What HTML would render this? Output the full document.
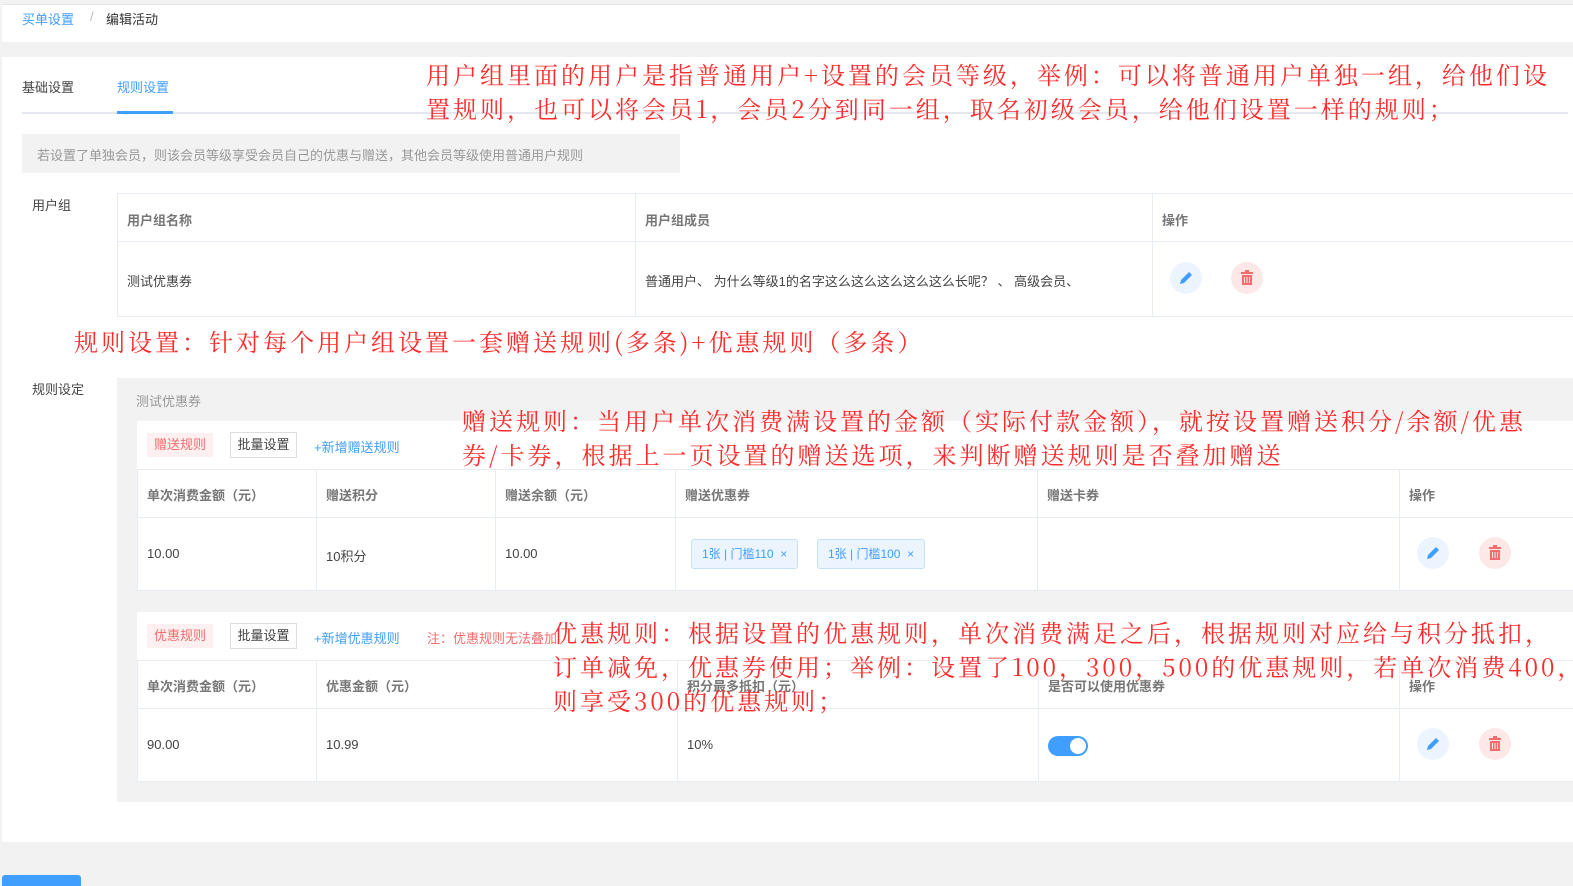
<!DOCTYPE html>
<html><head><meta charset="utf-8"><style>
*{margin:0;padding:0;box-sizing:border-box}
body{width:1573px;height:886px;position:relative;overflow:hidden;background:#f2f2f2;font-family:"Liberation Sans","Noto Sans CJK SC",sans-serif;font-size:13px;color:#444}
.a{position:absolute;white-space:nowrap}
.w{position:absolute;background:#fff}
.red{position:absolute;white-space:nowrap;color:#ff2a2a;font-family:"Noto Serif CJK SC",serif;font-size:24px;line-height:34px;letter-spacing:3px}
.th{position:absolute;color:#777;font-weight:bold;font-size:13px}
.hl{position:absolute;height:1px;background:#e8ecf3}
.vl{position:absolute;width:1px;background:#e8ecf3}
.ic{position:absolute;width:32px;height:32px;border-radius:50%}
.ed{background:#ecf5ff}.dl{background:#fde8e8}
.tag{position:absolute;height:30px;line-height:28px;border:1px solid #c6e0fb;background:#ecf5ff;color:#409eff;font-size:12px;padding:0 10px;border-radius:3px}
</style></head><body>
<div class="w" style="left:2px;top:4px;width:1571px;height:38px;border-top:1px solid #e6e6e6"></div>
<div class="a" style="left:22px;top:9px;color:#409eff">买单设置</div>
<div class="a" style="left:90px;top:9px;color:#bbb">/</div>
<div class="a" style="left:106px;top:9px;color:#333">编辑活动</div>
<div class="w" style="left:2px;top:57px;width:1571px;height:785px"></div>
<div class="a" style="left:22px;top:77px">基础设置</div>
<div class="a" style="left:117px;top:77px;color:#409eff">规则设置</div>
<div class="hl" style="left:22px;top:112px;width:1546px;height:2px;background:#e4e7ed"></div>
<div class="a" style="left:117px;top:111px;width:56px;height:3px;background:#409eff"></div>
<div class="a" style="left:22px;top:134px;width:658px;height:39px;background:#f2f2f2"></div>
<div class="a" style="left:37px;top:145px;color:#999">若设置了单独会员，则该会员等级享受会员自己的优惠与赠送，其他会员等级使用普通用户规则</div>
<div class="a" style="left:32px;top:195px">用户组</div>
<div class="hl" style="left:117px;top:193px;width:1456px"></div>
<div class="hl" style="left:117px;top:241px;width:1456px"></div>
<div class="hl" style="left:117px;top:316px;width:1456px"></div>
<div class="vl" style="left:117px;top:193px;height:124px"></div>
<div class="vl" style="left:635px;top:193px;height:124px"></div>
<div class="vl" style="left:1152px;top:193px;height:124px"></div>
<div class="th" style="left:127px;top:210px">用户组名称</div>
<div class="th" style="left:645px;top:210px">用户组成员</div>
<div class="th" style="left:1162px;top:210px">操作</div>
<div class="a" style="left:127px;top:271px">测试优惠券</div>
<div class="a" style="left:645px;top:271px">普通用户、 为什么等级1的名字这么这么这么这么这么长呢？ 、 高级会员、</div>
<div class="ic ed" style="left:1170px;top:262px"></div><div class="ic dl" style="left:1231px;top:262px"></div>
<div class="a" style="left:32px;top:379px">规则设定</div>
<div class="a" style="left:117px;top:378px;width:1456px;height:424px;background:#f2f2f2"></div>
<div class="a" style="left:136px;top:391px;color:#999">测试优惠券</div>
<div class="w" style="left:137px;top:421px;width:1436px;height:169px"></div>
<div class="a" style="left:147px;top:433px;width:66px;height:24px;background:#fef0f0;color:#f56c6c;line-height:24px;text-align:center">赠送规则</div>
<div class="a" style="left:230px;top:432px;width:67px;height:26px;border:1px solid #ddd;line-height:24px;text-align:center">批量设置</div>
<div class="a" style="left:314px;top:437px;color:#409eff">+新增赠送规则</div>
<div class="hl" style="left:137px;top:469px;width:1436px"></div>
<div class="hl" style="left:137px;top:517px;width:1436px"></div>
<div class="hl" style="left:137px;top:590px;width:1436px"></div>
<div class="vl" style="left:137px;top:469px;height:121px"></div>
<div class="vl" style="left:316px;top:469px;height:121px"></div>
<div class="vl" style="left:495px;top:469px;height:121px"></div>
<div class="vl" style="left:675px;top:469px;height:121px"></div>
<div class="vl" style="left:1037px;top:469px;height:121px"></div>
<div class="vl" style="left:1399px;top:469px;height:121px"></div>
<div class="th" style="left:147px;top:485px">单次消费金额（元）</div>
<div class="th" style="left:326px;top:485px">赠送积分</div>
<div class="th" style="left:505px;top:485px">赠送余额（元）</div>
<div class="th" style="left:685px;top:485px">赠送优惠券</div>
<div class="th" style="left:1047px;top:485px">赠送卡券</div>
<div class="th" style="left:1409px;top:485px">操作</div>
<div class="a" style="left:147px;top:546px">10.00</div>
<div class="a" style="left:326px;top:546px">10积分</div>
<div class="a" style="left:505px;top:546px">10.00</div>
<div class="tag" style="left:691px;top:539px">1张 | 门槛110 &nbsp;×</div>
<div class="tag" style="left:817px;top:539px">1张 | 门槛100 &nbsp;×</div>
<div class="ic ed" style="left:1417px;top:537px"></div><div class="ic dl" style="left:1479px;top:537px"></div>
<div class="w" style="left:137px;top:612px;width:1436px;height:169px"></div>
<div class="a" style="left:147px;top:624px;width:66px;height:24px;background:#fef0f0;color:#f56c6c;line-height:24px;text-align:center">优惠规则</div>
<div class="a" style="left:230px;top:623px;width:67px;height:26px;border:1px solid #ddd;line-height:24px;text-align:center">批量设置</div>
<div class="a" style="left:314px;top:628px;color:#409eff">+新增优惠规则</div>
<div class="a" style="left:427px;top:628px;color:#f56c6c">注：优惠规则无法叠加</div>
<div class="hl" style="left:137px;top:660px;width:1436px"></div>
<div class="hl" style="left:137px;top:708px;width:1436px"></div>
<div class="hl" style="left:137px;top:781px;width:1436px"></div>
<div class="vl" style="left:137px;top:660px;height:121px"></div>
<div class="vl" style="left:316px;top:660px;height:121px"></div>
<div class="vl" style="left:677px;top:660px;height:121px"></div>
<div class="vl" style="left:1038px;top:660px;height:121px"></div>
<div class="vl" style="left:1399px;top:660px;height:121px"></div>
<div class="th" style="left:147px;top:676px">单次消费金额（元）</div>
<div class="th" style="left:326px;top:676px">优惠金额（元）</div>
<div class="th" style="left:687px;top:676px">积分最多抵扣（元）</div>
<div class="th" style="left:1048px;top:676px">是否可以使用优惠券</div>
<div class="th" style="left:1409px;top:676px">操作</div>
<div class="a" style="left:147px;top:737px">90.00</div>
<div class="a" style="left:326px;top:737px">10.99</div>
<div class="a" style="left:687px;top:737px">10%</div>
<div class="a" style="left:1048px;top:736px;width:40px;height:20px;border-radius:10px;background:#409eff"><div style="position:absolute;right:2px;top:2px;width:16px;height:16px;border-radius:50%;background:#fff"></div></div>
<div class="ic ed" style="left:1417px;top:728px"></div><div class="ic dl" style="left:1479px;top:728px"></div>
<div class="a" style="left:2px;top:875px;width:79px;height:11px;background:#409eff;border-radius:3px 3px 0 0"></div>
<div class="red" style="left:426px;top:57px">用户组里面的用户是指普通用户+设置的会员等级，举例：可以将普通用户单独一组，给他们设<br>置规则，也可以将会员1，会员2分到同一组，取名初级会员，给他们设置一样的规则；</div>
<div class="red" style="left:74px;top:324px">规则设置：针对每个用户组设置一套赠送规则(多条)+优惠规则（多条）</div>
<div class="red" style="left:462px;top:403px">赠送规则：当用户单次消费满设置的金额（实际付款金额），就按设置赠送积分/余额/优惠<br>券/卡券，根据上一页设置的赠送选项，来判断赠送规则是否叠加赠送</div>
<div class="red" style="left:553px;top:615px">优惠规则：根据设置的优惠规则，单次消费满足之后，根据规则对应给与积分抵扣，<br>订单减免，优惠券使用；举例：设置了100，300，500的优惠规则，若单次消费400，<br>则享受300的优惠规则；</div>
<svg style="position:absolute;left:0;top:0" width="1573" height="886">
<defs>
<g id="pen"><path d="M-6 6 L-5 2 L3 -6 L6 -3 L-2 5 Z" fill="#409eff"/></g>
<g id="bin" fill="#f56c6c"><rect x="-6" y="-6" width="12" height="2"/><rect x="-2" y="-8" width="4" height="2"/><path d="M-5 -3 H5 V7 H-5 Z M-3 -1 V5 H-2 V-1 Z M-0.5 -1 V5 H0.5 V-1 Z M2 -1 V5 H3 V-1 Z" fill-rule="evenodd"/></g>
</defs>
<use href="#pen" x="1186" y="278"/><use href="#bin" x="1247" y="278"/>
<use href="#pen" x="1433" y="553"/><use href="#bin" x="1495" y="553"/>
<use href="#pen" x="1433" y="744"/><use href="#bin" x="1495" y="744"/>
</svg>
</body></html>
